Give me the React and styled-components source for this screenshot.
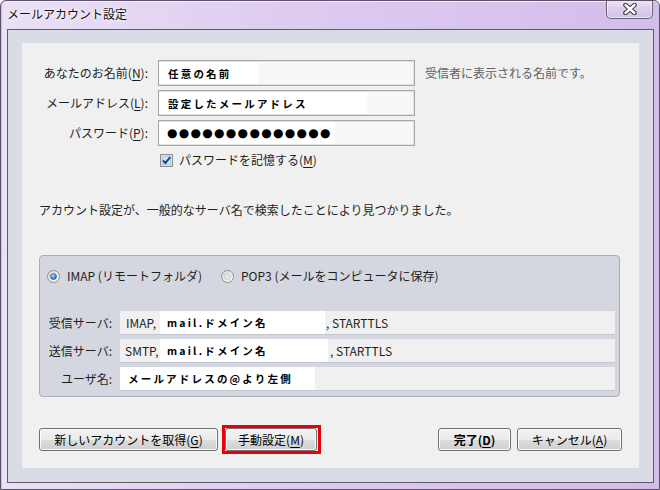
import React from 'react';
import styled, {createGlobalStyle} from 'styled-components';

const GlobalStyle = createGlobalStyle`
  html, body {
    margin: 0;
    padding: 0;
    background: #fff;
  }
  body {
    font-family: "Noto Sans CJK JP", "Noto Sans", sans-serif;
    font-size: 12px;
    color: #1e1e1e;
  }
`;

const Window = styled.div`
  width: 660px;
  height: 490px;
  box-sizing: border-box;
  display: flex;
  flex-direction: column;
  border: 1px solid #5b5168;
  border-radius: 6px 6px 0 0;
  background: linear-gradient(90deg, #ebe0f6 0%, #ddcbf0 45%, #d3bdea 100%);
  box-shadow: inset 1px 0 0 #b9c4e8, inset 0 1px 0 #f6f0fb;
  overflow: hidden;
`;

const TitleBar = styled.div`
  height: 28px;
  display: flex;
  justify-content: space-between;
  align-items: flex-start;
  padding: 0 6px 0 6px;
`;

const Title = styled.div`
  margin-top: 5px;
  font-size: 12px;
  line-height: 16px;
  color: #111;
  text-shadow: 0 0 6px rgba(255, 255, 255, 0.95), 0 0 3px #fff;
`;

const CloseButton = styled.div`
  width: 47px;
  height: 19px;
  box-sizing: border-box;
  margin-top: -1px;
  display: flex;
  align-items: center;
  justify-content: center;
  border: 1px solid #6a6077;
  border-top: none;
  border-radius: 0 0 5px 5px;
  background: linear-gradient(#efe7f6, #dbcdea 55%, #d2c2e4);
  box-shadow: inset 0 0 0 1px rgba(255, 255, 255, 0.55);
`;

const Frame = styled.div`
  flex: 1;
  display: flex;
  margin: 0 5px 6px 6px;
  padding: 13px 14px 14px 14px;
  border: 1px solid #5e5a68;
  background: #d9dce4;
`;

const Content = styled.div`
  flex: 1;
  display: flex;
  flex-direction: column;
  padding: 17px 17px 14px 17px;
  background: #f0f0f0;
`;

const FormGrid = styled.div`
  display: grid;
  grid-template-columns: 109px 257px auto;
  grid-template-rows: 26px 26px 26px 20px;
  column-gap: 10px;
  row-gap: 4px;
  align-items: center;
`;

const Label = styled.label`
  justify-self: end;
  white-space: nowrap;
  line-height: 16px;
  color: #1e1e1e;
`;

const Key = styled.u`
  text-decoration: underline;
  text-underline-offset: 2px;
`;

const Field = styled.div`
  height: 26px;
  box-sizing: border-box;
  display: flex;
  border: 1px solid #a6a6a6;
  box-shadow: inset 0 0 0 1px #e4e4e4;
  background: #f8f8f8;
  padding: 1px 0;
`;

const Pasted = styled.span`
  display: flex;
  align-items: center;
  width: ${p => p.$w}px;
  flex: none;
  box-sizing: border-box;
  padding-left: ${p => p.$pad ?? 9}px;
  background: #fff;
  font-size: 10.5px;
  font-weight: 700;
  letter-spacing: 2.2px;
  color: #000;
  white-space: nowrap;
`;

const Dots = styled.span`
  font-family: "DejaVu Sans", sans-serif;
  font-size: 12px;
  letter-spacing: 1.3px;
  font-weight: 400;
`;

const Hint = styled.span`
  color: #616161;
  line-height: 16px;
  white-space: nowrap;
`;

const CheckRow = styled.label`
  grid-column: 2 / 4;
  grid-row: 4;
  display: flex;
  align-items: center;
  gap: 6px;
  padding-left: 2px;
  line-height: 16px;
`;

const Message = styled.p`
  margin: 32px 0 0;
  line-height: 16px;
  color: #1e1e1e;
`;

const Group = styled.div`
  margin: 37px 2px 0 0;
  height: 142px;
  box-sizing: border-box;
  display: flex;
  flex-direction: column;
  padding: 12px 4px 4px 0;
  border: 1px solid #a9adb6;
  border-radius: 4px;
  background: #d4d7df;
`;

const RadioRow = styled.div`
  display: flex;
  align-items: center;
  padding-left: 7px;
  height: 16px;
`;

const RadioLabel = styled.label`
  display: flex;
  align-items: center;
  gap: 7px;
  margin-right: ${p => p.$gap || 0}px;
  white-space: nowrap;
  line-height: 16px;
`;

const ServerRows = styled.div`
  margin-top: 27px;
  display: grid;
  grid-template-columns: 72px 1fr;
  grid-auto-rows: 24px;
  column-gap: 8px;
  row-gap: 4px;
  align-items: stretch;
`;

const RowLabel = styled.span`
  align-self: center;
  justify-self: end;
  white-space: nowrap;
  line-height: 16px;
`;

const RowBox = styled.div`
  display: flex;
  align-items: stretch;
  box-sizing: border-box;
  background: #f0f0f0;
  border-bottom: 1px solid #c4c7cf;
  white-space: nowrap;
`;

const Plain = styled.span`
  display: flex;
  align-items: center;
  width: ${p => (p.$w ? `${p.$w}px` : 'auto')};
  flex: none;
  padding-left: ${p => p.$pad || 0}px;
  box-sizing: border-box;
  font-size: 12px;
  letter-spacing: 0;
`;

const ButtonBar = styled.div`
  margin-top: auto;
  display: flex;
  align-items: center;
`;

const Button = styled.button`
  height: 23px;
  width: ${p => p.$w}px;
  box-sizing: border-box;
  padding: 0;
  font-family: inherit;
  font-size: 12px;
  font-weight: ${p => (p.$default ? 700 : 400)};
  color: #000;
  border: 1px solid #707070;
  border-radius: 3px;
  background: linear-gradient(#f2f2f2 0%, #ebebeb 50%, #dddddd 51%, #cfcfcf 100%);
  box-shadow: inset 0 0 0 1px #fbfbfb;
  line-height: 16px;
`;

const Highlight = styled.span`
  display: flex;
  margin-left: 4px;
  padding: 0 1px 0 0;
  border: 3px solid #e3000f;
`;

const Spacer = styled.span`
  flex: 1;
`;

const Gap = styled.span`
  width: ${p => p.$w}px;
  flex: none;
`;

function CloseGlyph() {
  return (
    <svg width="16" height="12" viewBox="0 0 16 12">
      <path d="M3.5 2 L12.5 10 M12.5 2 L3.5 10" stroke="#3d3a48" strokeWidth="4.6" strokeLinecap="round" fill="none" />
      <path d="M3.5 2 L12.5 10 M12.5 2 L3.5 10" stroke="#fff" strokeWidth="2.4" strokeLinecap="round" fill="none" />
    </svg>
  );
}

function CheckBox() {
  return (
    <svg width="13" height="13" viewBox="0 0 13 13">
      <rect x="0.5" y="0.5" width="12" height="12" fill="#f4f4f4" stroke="#8e8f8f" />
      <rect x="2" y="2" width="9" height="9" fill="#cfe3f7" stroke="#9ab8d8" strokeWidth="0.8" />
      <path d="M3 6.3 L5.4 9 L10.2 3.2" stroke="#1d3d74" strokeWidth="1.9" fill="none" />
    </svg>
  );
}

function Radio({checked}) {
  return (
    <svg width="13" height="13" viewBox="0 0 13 13">
      <defs>
        <radialGradient id="rb" cx="40%" cy="35%" r="70%">
          <stop offset="0%" stopColor="#a9dcff" />
          <stop offset="100%" stopColor="#1c5ba8" />
        </radialGradient>
        <linearGradient id="rg" x1="0" y1="0" x2="1" y2="1">
          <stop offset="0%" stopColor="#d8d8d8" />
          <stop offset="100%" stopColor="#fdfdfd" />
        </linearGradient>
      </defs>
      <circle cx="6.5" cy="6.5" r="6" fill="url(#rg)" stroke="#8c8e90" />
      {checked ? (
        <circle cx="6.5" cy="6.5" r="3" fill="url(#rb)" stroke="#24538d" strokeWidth="0.6" />
      ) : (
        <circle cx="6.5" cy="6.5" r="3.3" fill="#e2e2e2" stroke="#c2c2c2" strokeWidth="0.6" />
      )}
    </svg>
  );
}

export default function App() {
  return (
    <>
      <GlobalStyle />
      <Window>
        <TitleBar>
          <Title>メールアカウント設定</Title>
          <CloseButton>
            <CloseGlyph />
          </CloseButton>
        </TitleBar>
        <Frame>
          <Content>
            <FormGrid>
              <Label>あなたのお名前(<Key>N</Key>):</Label>
              <Field>
                <Pasted $w={99}>任意の名前</Pasted>
              </Field>
              <Hint>受信者に表示される名前です。</Hint>

              <Label>メールアドレス(<Key>L</Key>):</Label>
              <Field>
                <Pasted $w={208}>設定したメールアドレス</Pasted>
              </Field>
              <span />

              <Label>パスワード(<Key>P</Key>):</Label>
              <Field>
                <Pasted $w={176} $pad={8}>
                  <Dots>●●●●●●●●●●●●●●</Dots>
                </Pasted>
              </Field>
              <span />

              <CheckRow>
                <CheckBox />
                <span>パスワードを記憶する(<Key>M</Key>)</span>
              </CheckRow>
            </FormGrid>

            <Message>アカウント設定が、一般的なサーバ名で検索したことにより見つかりました。</Message>

            <Group>
              <RadioRow>
                <RadioLabel $gap={19}>
                  <Radio checked />
                  <span>IMAP (リモートフォルダ)</span>
                </RadioLabel>
                <RadioLabel>
                  <Radio />
                  <span>POP3 (メールをコンピュータに保存)</span>
                </RadioLabel>
              </RadioRow>

              <ServerRows>
                <RowLabel>受信サーバ:</RowLabel>
                <RowBox>
                  <Plain $w={40} $pad={6}>IMAP,</Plain>
                  <Pasted $w={165} $pad={7}>mail.ドメイン名</Pasted>
                  <Plain $pad={1}>, STARTTLS</Plain>
                </RowBox>

                <RowLabel>送信サーバ:</RowLabel>
                <RowBox>
                  <Plain $w={40} $pad={5}>SMTP,</Plain>
                  <Pasted $w={168} $pad={7}>mail.ドメイン名</Pasted>
                  <Plain $pad={2}>, STARTTLS</Plain>
                </RowBox>

                <RowLabel>ユーザ名:</RowLabel>
                <RowBox>
                  <Pasted $w={195} $pad={8}>メールアドレスの@より左側</Pasted>
                </RowBox>
              </ServerRows>
            </Group>

            <ButtonBar>
              <Button $w={179}>新しいアカウントを取得(<Key>G</Key>)</Button>
              <Highlight>
                <Button $w={92}>手動設定(<Key>M</Key>)</Button>
              </Highlight>
              <Spacer />
              <Button $w={73} $default>完了(<Key>D</Key>)</Button>
              <Gap $w={6} />
              <Button $w={105}>キャンセル(<Key>A</Key>)</Button>
            </ButtonBar>
          </Content>
        </Frame>
      </Window>
    </>
  );
}
